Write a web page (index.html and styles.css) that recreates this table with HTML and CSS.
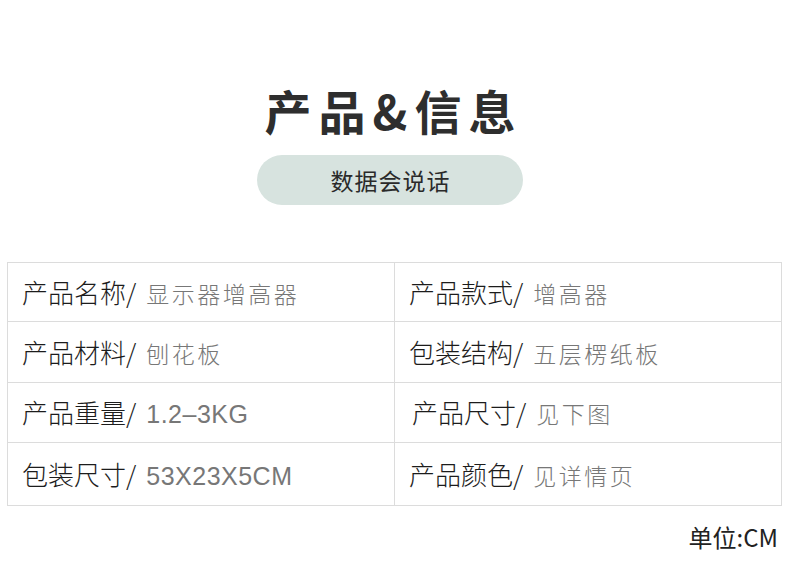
FILE: index.html
```html
<!DOCTYPE html>
<html lang="zh-CN">
<head>
<meta charset="utf-8">
<title>产品&信息</title>
<link rel="stylesheet" href="styles.css">
</head>
<body>
<main class="page">
  <header class="head">
    <h1 class="title">产品&amp;信息</h1>
    <div class="pill">数据会说话</div>
  </header>
  <section class="table">
    <div class="cell c1 r1"><p class="line"><span class="k">产品名称/</span><span class="v">显示器增高器</span></p></div>
    <div class="cell c2 r1"><p class="line"><span class="k">产品款式/</span><span class="v">增高器</span></p></div>
    <div class="cell c1 r2"><p class="line"><span class="k">产品材料/</span><span class="v">刨花板</span></p></div>
    <div class="cell c2 r2"><p class="line"><span class="k">包装结构/</span><span class="v">五层楞纸板</span></p></div>
    <div class="cell c1 r3"><p class="line"><span class="k">产品重量/</span><span class="v num">1.2–3KG</span></p></div>
    <div class="cell c2 r3 shift"><p class="line"><span class="k">产品尺寸/</span><span class="v">见下图</span></p></div>
    <div class="cell c1 r4"><p class="line"><span class="k">包装尺寸/</span><span class="v num">53X23X5CM</span></p></div>
    <div class="cell c2 r4"><p class="line"><span class="k">产品颜色/</span><span class="v">见详情页</span></p></div>
  </section>
  <p class="unit">单位:CM</p>
</main>
</body>
</html>
```
FILE: styles.css
```css
* { box-sizing: border-box; }
html, body { margin: 0; padding: 0; background: #fff; }
body {
  font-family: "Noto Sans CJK SC", "Noto Sans", sans-serif;
  color: #222;
}
.page {
  width: 790px;
  height: 581px;
  display: flex;
  flex-direction: column;
}
.head {
  display: flex;
  flex-direction: column;
  align-items: center;
  padding: 76px 10px 0 0;
}
.title {
  margin: 0 0 0 7px;
  font-size: 47px;
  line-height: 68px;
  font-weight: 700;
  letter-spacing: 7px;
  color: #2e2e2e;
}
.pill {
  margin-top: 11px;
  width: 266px;
  height: 50px;
  border-radius: 25px;
  background: #d7e3df;
  display: flex;
  align-items: center;
  justify-content: center;
  padding-left: 1px;
  font-size: 23px;
  color: #2a2a2a;
  letter-spacing: 1px;
}
.table {
  margin: 57px 0 0 7px;
  width: 775px;
  border: 1px solid #dcdcdc;
  display: grid;
  grid-template-columns: 387px 1fr;
  grid-template-rows: 59px 61px 60px 62px;
}
.cell {
  display: flex;
  align-items: center;
  padding: 3px 0 0 14px;
  border-bottom: 1px solid #dcdcdc;
  white-space: nowrap;
}
.line {
  margin: 0;
  line-height: 34px;
}
.c1 { border-right: 1px solid #dcdcdc; }
.c2 { padding-left: 14px; }
.r4 { border-bottom: none; }
.shift { padding-left: 17px; }
.k {
  font-size: 26px;
  font-weight: 300;
  color: #1c1c1c;
}
.v {
  margin-left: 10px;
  font-size: 23px;
  font-weight: 300;
  color: #777;
  letter-spacing: 2.5px;
}
.v.num {
  font-family: "Liberation Sans", "Noto Sans", sans-serif;
  font-size: 25px;
  letter-spacing: 0.5px;
}
.unit {
  margin: 16px 12px 0 0;
  align-self: flex-end;
  font-size: 24px;
  line-height: 30px;
  color: #222;
}
```
